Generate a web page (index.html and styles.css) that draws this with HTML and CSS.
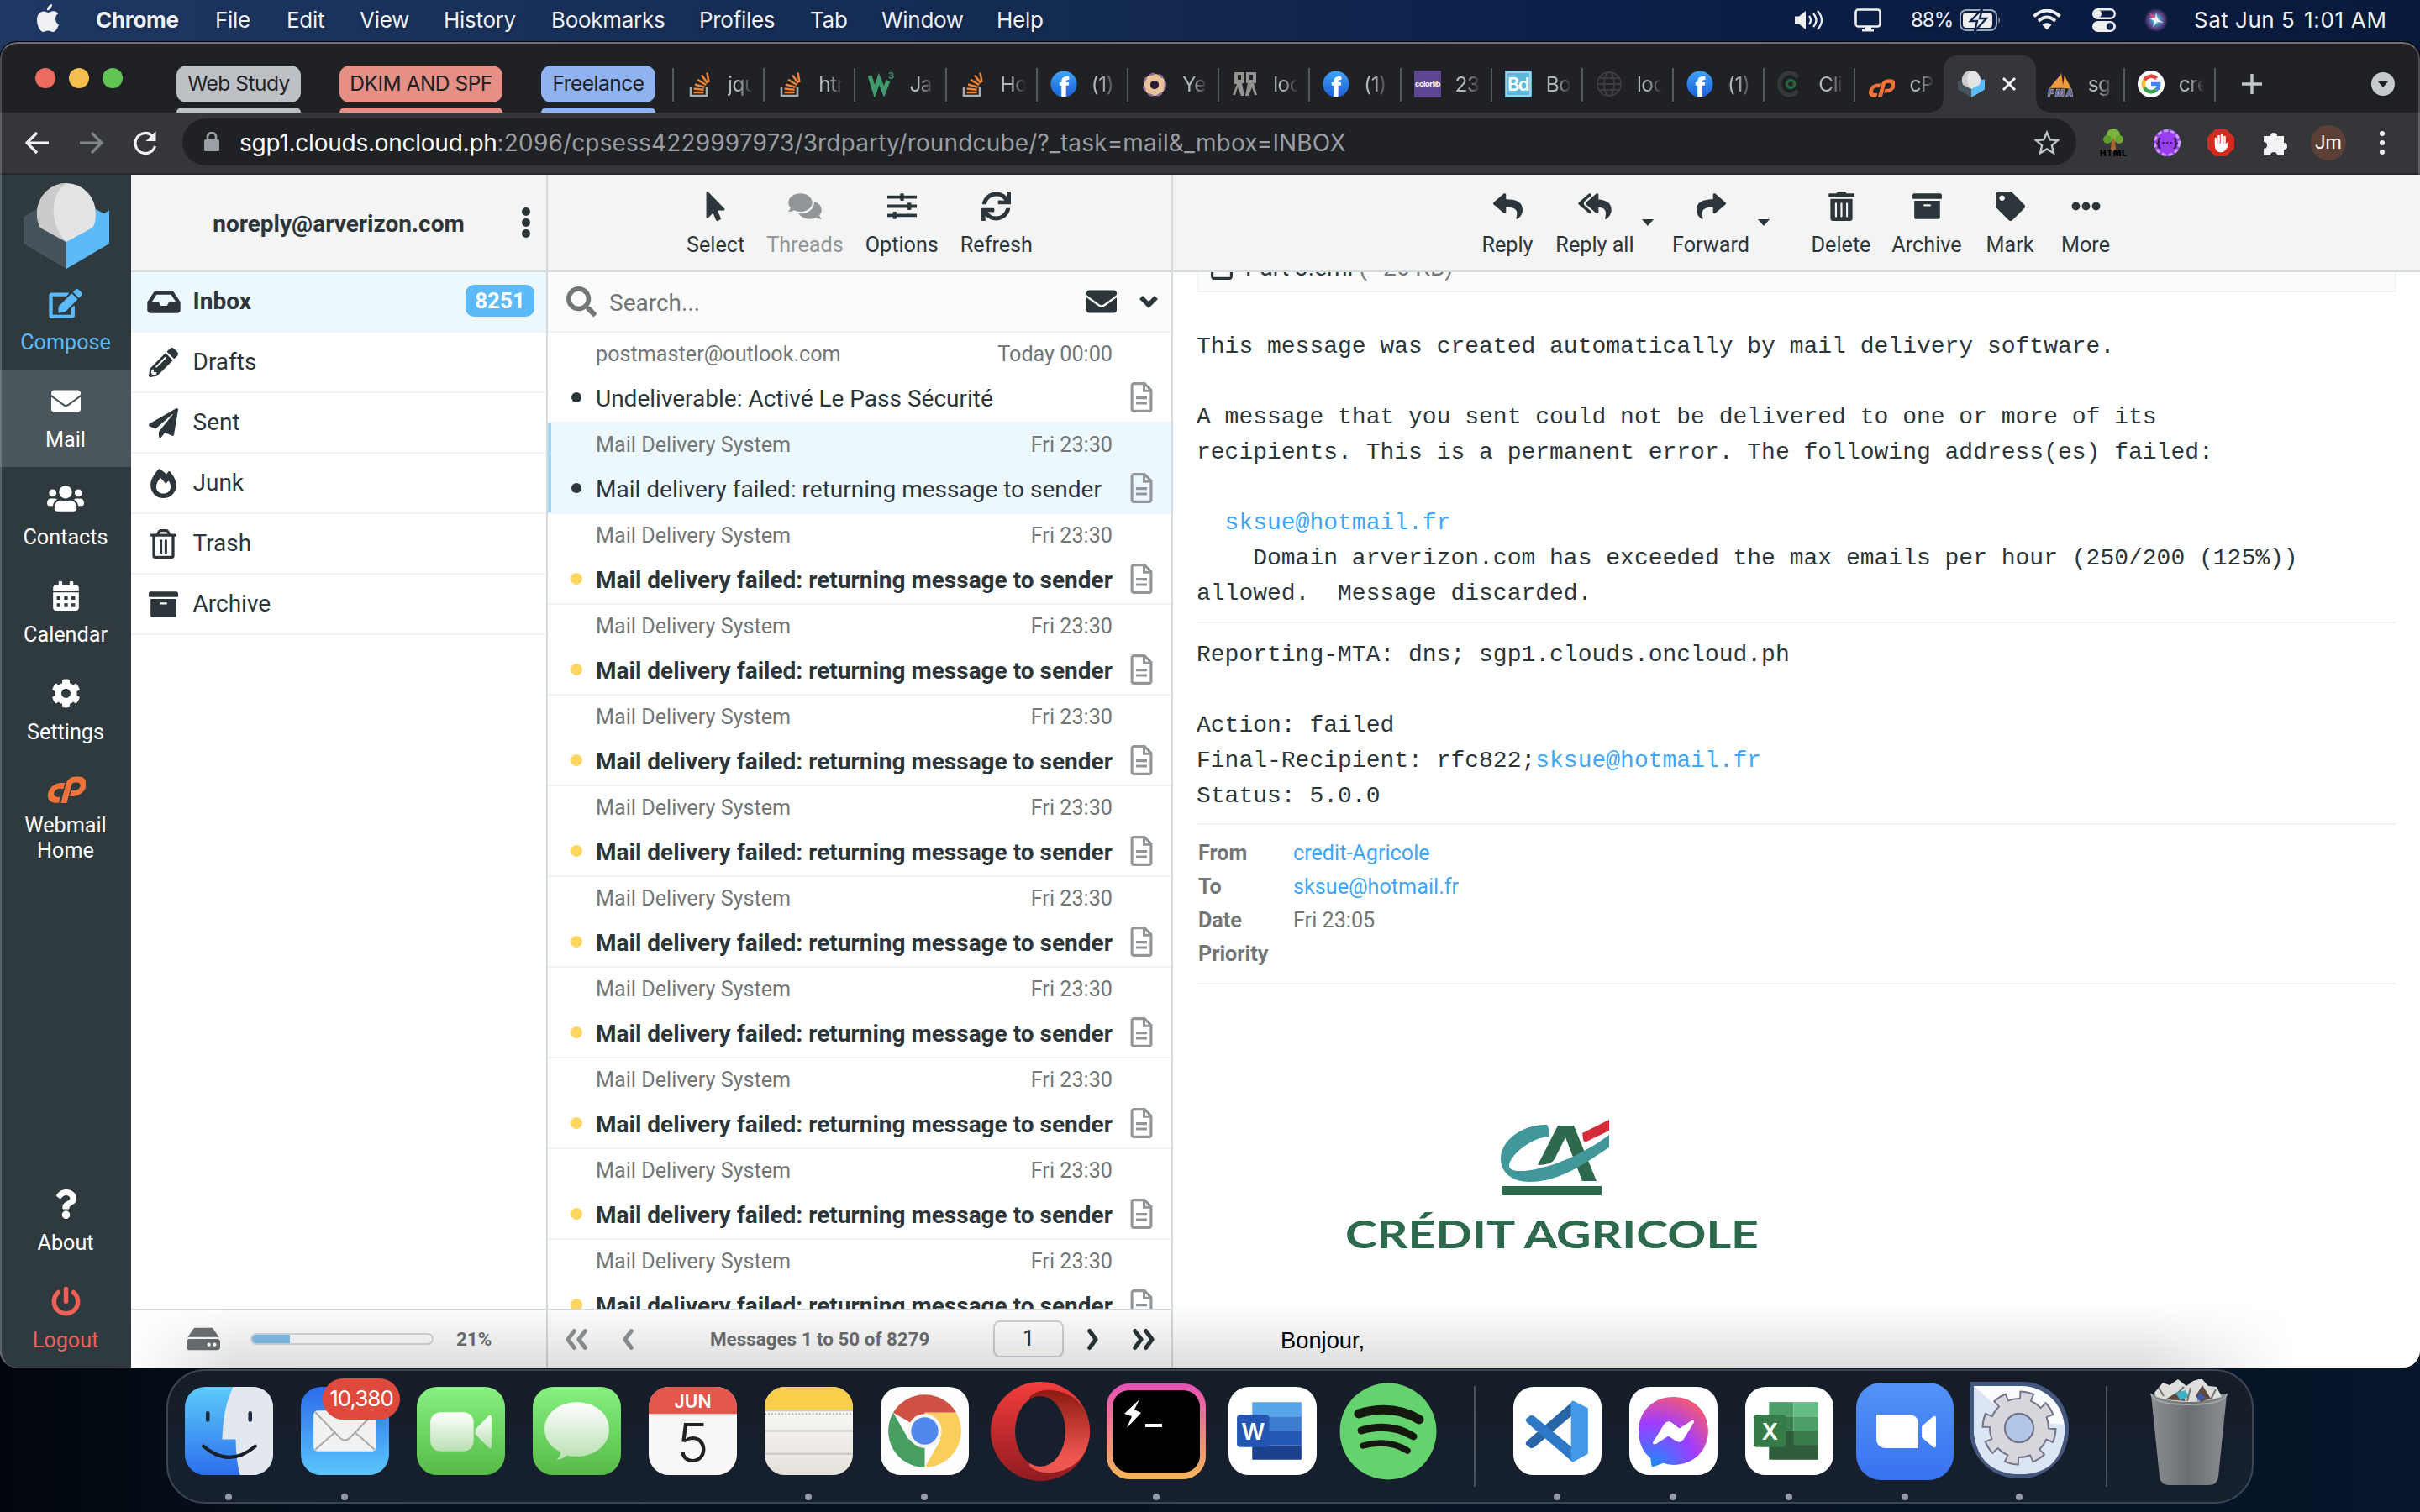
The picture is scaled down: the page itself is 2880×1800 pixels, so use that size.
FILE: index.html
```html
<!DOCTYPE html>
<html lang="en">
<head>
<meta charset="utf-8">
<title>Roundcube Webmail :: Inbox</title>
<link rel="stylesheet" href="styles.css">
</head>
<body>
<svg class="defs" width="0" height="0">
  <defs>
    <linearGradient id="g-fb" x1="0" y1="0" x2="0" y2="1"><stop offset="0" stop-color="#3fa3f5"/><stop offset="1" stop-color="#1b5fd8"/></linearGradient>
    <linearGradient id="g-blue" x1="0" y1="0" x2="0" y2="1"><stop offset="0" stop-color="#5ccbfa"/><stop offset="1" stop-color="#2c6fec"/></linearGradient>
    <linearGradient id="g-mail" x1="0" y1="0" x2="0" y2="1"><stop offset="0" stop-color="#2c6bea"/><stop offset="1" stop-color="#5ac6fa"/></linearGradient>
    <linearGradient id="g-green" x1="0" y1="0" x2="0" y2="1"><stop offset="0" stop-color="#87f080"/><stop offset="1" stop-color="#56bb46"/></linearGradient>
    <linearGradient id="g-white" x1="0" y1="0" x2="0" y2="1"><stop offset="0" stop-color="#fff"/><stop offset="1" stop-color="#b9dfb2"/></linearGradient>
    <linearGradient id="g-paper" x1="0" y1="0" x2="0" y2="1"><stop offset="0" stop-color="#fff"/><stop offset="1" stop-color="#e4e0da"/></linearGradient>
    <linearGradient id="g-opera" x1="0" y1="0" x2="0" y2="1"><stop offset="0" stop-color="#f43d3d"/><stop offset="1" stop-color="#8f1b20"/></linearGradient>
    <linearGradient id="g-opera2" x1="0" y1="0" x2="0" y2="1"><stop offset="0" stop-color="#8c1a12"/><stop offset=".8" stop-color="#ee5650"/></linearGradient>
    <linearGradient id="g-term" x1="0" y1="0" x2="0" y2="1"><stop offset="0" stop-color="#e750b6"/><stop offset="1" stop-color="#f4b658"/></linearGradient>
    <linearGradient id="g-zoom" x1="0" y1="0" x2="0" y2="1"><stop offset="0" stop-color="#5294f8"/><stop offset="1" stop-color="#3872ef"/></linearGradient>
    <radialGradient id="g-msgr" cx=".2" cy="1" r="1.15"><stop offset="0" stop-color="#1a8cff"/><stop offset=".55" stop-color="#a13cff"/><stop offset="1" stop-color="#ff5e63"/></radialGradient>
    <radialGradient id="g-siri"><stop offset="0" stop-color="#fff"/><stop offset=".3" stop-color="#4aa5c9"/><stop offset=".7" stop-color="#5d3f86"/><stop offset="1" stop-color="#1f2444"/></radialGradient>
    <linearGradient id="g-bin" x1="0" y1="0" x2="1" y2="0"><stop offset="0" stop-color="#8b8e90"/><stop offset=".5" stop-color="#6c6f71"/><stop offset="1" stop-color="#8b8e90"/></linearGradient>
    <linearGradient id="g-gear" x1="0" y1="0" x2="0" y2="1"><stop offset="0" stop-color="#e6e6e8"/><stop offset="1" stop-color="#b9bac4"/></linearGradient>
  </defs>
  <symbol id="envelope" viewBox="0 0 512 512"><path d="M502.3 190.8c3.9-3.1 9.7-.2 9.7 4.7V400c0 26.5-21.5 48-48 48H48c-26.5 0-48-21.5-48-48V195.6c0-5 5.7-7.8 9.7-4.7 22.4 17.4 52.1 39.5 154.1 113.6 21.1 15.4 56.7 47.8 92.2 47.6 35.7.3 72-32.8 92.3-47.6 102-74.1 131.6-96.3 154-113.7zM256 320c23.2.4 56.6-29.2 73.4-41.4 132.7-96.3 142.8-104.7 173.4-128.7 5.8-4.5 9.2-11.5 9.2-18.9v-19c0-26.5-21.5-48-48-48H48c-26.5 0-48 21.5-48 48v19c0 7.4 3.4 14.3 9.2 18.9 30.6 23.9 40.7 32.4 173.4 128.7 16.8 12.2 50.2 41.8 73.4 41.4z"/></symbol>
  <symbol id="reply" viewBox="0 0 512 512"><path d="M8.309 189.836L184.313 37.851C199.719 24.546 224 35.347 224 56.015v80.053c160.629 1.839 288 34.032 288 186.258 0 61.441-39.581 122.309-83.333 154.132-13.653 9.931-33.111-2.533-28.077-18.631 45.344-145.012-21.507-183.51-176.59-185.742V360c0 20.7-24.3 31.453-39.687 18.164l-176.004-152c-11.071-9.562-11.086-26.753 0-36.328z"/></symbol>
  <symbol id="forward" viewBox="0 0 512 512"><path transform="matrix(-1 0 0 1 512 0)" d="M8.309 189.836L184.313 37.851C199.719 24.546 224 35.347 224 56.015v80.053c160.629 1.839 288 34.032 288 186.258 0 61.441-39.581 122.309-83.333 154.132-13.653 9.931-33.111-2.533-28.077-18.631 45.344-145.012-21.507-183.51-176.59-185.742V360c0 20.7-24.3 31.453-39.687 18.164l-176.004-152c-11.071-9.562-11.086-26.753 0-36.328z"/></symbol>
  <symbol id="replyall" viewBox="0 0 576 512"><path d="M136.309 189.836L312.313 37.851C327.72 24.546 352 35.348 352 56.015v82.763c129.182 10.231 224 52.212 224 183.548 0 61.441-39.582 122.309-83.333 154.132-13.653 9.931-33.111-2.533-28.077-18.631 38.512-123.162-3.922-169.482-112.59-182.015v84.175c0 20.701-24.3 31.453-39.687 18.164L136.309 226.164c-11.071-9.561-11.086-26.753 0-36.328zm-128 36.328L184.313 378.15C199.7 391.439 224 380.687 224 359.986v-15.818l-108.606-93.785A55.96 55.96 0 0 1 96 207.998a55.953 55.953 0 0 1 19.393-42.38L224 71.832V56.015c0-20.667-24.28-31.469-39.687-18.164L8.309 189.836c-11.086 9.575-11.071 26.767 0 36.328z"/></symbol>
  <symbol id="trash" viewBox="0 0 448 512"><path d="M32 464a48 48 0 0 0 48 48h288a48 48 0 0 0 48-48V128H32zm272-256a16 16 0 0 1 32 0v224a16 16 0 0 1-32 0zm-96 0a16 16 0 0 1 32 0v224a16 16 0 0 1-32 0zm-96 0a16 16 0 0 1 32 0v224a16 16 0 0 1-32 0zM432 32H312l-9.4-18.7A24 24 0 0 0 281.1 0H166.8a23.72 23.72 0 0 0-21.4 13.3L136 32H16A16 16 0 0 0 0 48v32a16 16 0 0 0 16 16h416a16 16 0 0 0 16-16V48a16 16 0 0 0-16-16z"/></symbol>
  <symbol id="trash-o" viewBox="0 0 448 512"><path d="M56 104v360q0 24 24 24h288q24 0 24-24V104" fill="none" stroke="currentColor" stroke-width="48"/><path d="M0 80h448v48H0zM160 184h44v240h-44zM244 184h44v240h-44z"/><path d="M118 92l34-56q8-12 20-12h104q12 0 20 12l34 56" fill="none" stroke="currentColor" stroke-width="46"/></symbol>
  <symbol id="archive" viewBox="0 0 512 512"><path d="M32 448c0 17.7 14.3 32 32 32h384c17.7 0 32-14.3 32-32V160H32v288zm160-212c0-6.6 5.4-12 12-12h104c6.6 0 12 5.4 12 12v8c0 6.6-5.4 12-12 12H204c-6.6 0-12-5.4-12-12v-8zM480 32H32C14.3 32 0 46.3 0 64v48c0 8.8 7.2 16 16 16h480c8.8 0 16-7.2 16-16V64c0-17.7-14.3-32-32-32z"/></symbol>
  <symbol id="tag" viewBox="0 0 512 512"><path d="M0 252.118V48C0 21.49 21.49 0 48 0h204.118a48 48 0 0 1 33.941 14.059l211.882 211.882c18.745 18.745 18.745 49.137 0 67.882L293.823 497.941c-18.745 18.745-49.137 18.745-67.882 0L14.059 286.059A48 48 0 0 1 0 252.118zM112 64c-26.51 0-48 21.49-48 48s21.49 48 48 48 48-21.49 48-48-21.49-48-48-48z"/></symbol>
  <symbol id="more" viewBox="0 0 512 512"><circle cx="80" cy="256" r="72"/><circle cx="256" cy="256" r="72"/><circle cx="432" cy="256" r="72"/></symbol>
  <symbol id="inbox" viewBox="0 0 576 512"><path d="M567.938 243.908L462.25 85.374A48.003 48.003 0 0 0 422.311 64H153.689a48 48 0 0 0-39.938 21.374L8.062 243.908A47.994 47.994 0 0 0 0 270.533V400c0 26.51 21.49 48 48 48h480c26.51 0 48-21.49 48-48V270.533a47.994 47.994 0 0 0-8.062-26.625zM162.252 128h251.497l85.333 128H376l-32 64H232l-32-64H76.918l85.334-128z"/></symbol>
  <symbol id="pencil" viewBox="0 0 512 512"><path d="M497.9 142.1l-46.1 46.1c-4.7 4.7-12.3 4.7-17 0l-111-111c-4.7-4.7-4.7-12.3 0-17l46.1-46.1c18.7-18.7 49.1-18.7 67.9 0l60.1 60.1c18.8 18.7 18.8 49.1 0 67.9zM284.2 99.8L21.6 362.4.4 483.9c-2.9 16.4 11.4 30.6 27.8 27.8l121.5-21.3 262.6-262.6c4.7-4.7 4.7-12.3 0-17l-111-111c-4.8-4.7-12.4-4.7-17.1 0zM124.1 339.9c-5.5-5.5-5.5-14.3 0-19.8l154-154c5.5-5.5 14.3-5.5 19.8 0s5.5 14.3 0 19.8l-154 154c-5.5 5.5-14.3 5.5-19.8 0zM88 424h48v36.3l-64.5 11.3-31.1-31.1L51.7 376H88v48z"/></symbol>
  <symbol id="plane" viewBox="0 0 512 512"><path d="M476 3.2L12.5 270.6c-18.1 10.4-15.8 35.6 2.2 43.2L121 358.4l287.3-253.2c5.5-4.9 13.3 2.6 8.6 8.3L176 407v80.5c0 23.6 28.5 32.9 42.5 15.8L282 426l124.6 52.2c14.2 6 30.4-2.9 33-18.2l72-432C515 7.8 493.3-6.8 476 3.2z"/></symbol>
  <symbol id="fire" viewBox="0 0 448 512"><path fill-rule="evenodd" d="M162 4c-9-9-16-3-22 4C62 96 0 190 0 284c0 130 98 228 224 228s224-98 224-228c0-78-52-168-112-236-8-8-16-6-22 0-14 14-26 30-38 48C246 62 206 40 162 4zM224 432c-76 0-126-50-126-118 0-52 28-104 74-158 34 36 60 70 92 104l48-52c24 36 38 72 38 106 0 68-50 118-126 118z"/></symbol>
  <symbol id="power" viewBox="0 0 512 512"><path d="M400 54.1c63 45 104 118.6 104 201.9 0 136.8-110.8 247.7-247.5 248C120 504.3 8.2 393 8 256.4 7.9 173.1 48.9 99.3 111.8 54.2c11.7-8.3 28-4.8 35 7.7L162.6 90c5.9 10.5 3.1 23.8-6.6 31-41.5 30.8-68 79.6-68 134.9-.1 92.3 74.5 168.1 168 168.1 91.6 0 168.6-74.2 168-169.1-.3-51.8-24.7-101.8-68.1-134-9.7-7.2-12.4-20.5-6.5-30.9l15.8-28.1c7-12.4 23.2-16.1 34.8-7.8zM296 264V24c0-13.3-10.7-24-24-24h-32c-13.3 0-24 10.7-24 24v240c0 13.3 10.7 24 24 24h32c13.3 0 24-10.7 24-24z"/></symbol>
  <symbol id="edit" viewBox="0 0 576 512"><path d="M402.6 83.2l90.2 90.2c3.8 3.8 3.8 10 0 13.8L274.4 405.6l-92.8 10.3c-12.4 1.4-22.9-9.1-21.5-21.5l10.3-92.8L388.8 83.2c3.8-3.8 10-3.8 13.8 0zm162-22.9l-48.8-48.8c-15.2-15.2-39.9-15.2-55.2 0l-35.4 35.4c-3.8 3.8-3.8 10 0 13.8l90.2 90.2c3.8 3.8 10 3.8 13.8 0l35.4-35.4c15.2-15.3 15.2-40 0-55.2zM384 346.2V448H64V128h229.8c3.2 0 6.2-1.3 8.5-3.5l40-40c7.6-7.6 2.2-20.5-8.5-20.5H48C21.5 64 0 85.5 0 112v352c0 26.5 21.5 48 48 48h352c26.5 0 48-21.5 48-48V306.2c0-10.7-12.9-16-20.5-8.5l-40 40c-2.2 2.3-3.5 5.3-3.5 8.5z"/></symbol>
  <symbol id="users" viewBox="0 0 640 512"><path d="M96 224c35.3 0 64-28.7 64-64s-28.7-64-64-64-64 28.7-64 64 28.7 64 64 64zm448 0c35.3 0 64-28.7 64-64s-28.7-64-64-64-64 28.7-64 64 28.7 64 64 64zm32 32h-64c-17.6 0-33.5 7.1-45.1 18.6 40.3 22.1 68.9 62 75.1 109.4h66c17.7 0 32-14.3 32-32v-32c0-35.3-28.7-64-64-64zm-256 0c61.9 0 112-50.1 112-112S381.9 32 320 32 208 82.1 208 144s50.1 112 112 112zm76.8 32h-8.3c-20.8 10-43.9 16-68.5 16s-47.6-6-68.5-16h-8.3C179.6 288 128 339.6 128 403.2V432c0 26.5 21.5 48 48 48h288c26.5 0 48-21.5 48-48v-28.8c0-63.6-51.6-115.2-115.2-115.2zm-223.7-13.4C161.5 263.1 145.6 256 128 256H64c-35.3 0-64 28.7-64 64v32c0 17.7 14.3 32 32 32h65.9c6.3-47.4 34.9-87.3 75.2-109.4z"/></symbol>
  <symbol id="calendar" viewBox="0 0 448 512"><path fill-rule="evenodd" d="M0 464c0 26.5 21.5 48 48 48h352c26.5 0 48-21.5 48-48V192H0zM64 256h64v64H64zM192 256h64v64h-64zM320 256h64v64h-64zM64 384h64v64H64zM192 384h64v64h-64zM320 384h64v64h-64z"/><path d="M400 64h-48V16c0-8.8-7.2-16-16-16h-32c-8.8 0-16 7.2-16 16v48H160V16c0-8.8-7.2-16-16-16h-32c-8.8 0-16 7.2-16 16v48H48C21.5 64 0 85.5 0 112v48h448v-48c0-26.5-21.5-48-48-48z"/></symbol>
  <symbol id="cog" viewBox="0 0 512 512"><path d="M487.4 315.7l-42.6-24.6c4.3-23.2 4.3-47 0-70.2l42.6-24.6c4.9-2.8 7.1-8.6 5.5-14-11.1-35.6-30-67.8-54.7-94.6-3.8-4.1-10-5.1-14.8-2.3L380.8 110c-17.9-15.4-38.5-27.3-60.8-35.1V25.8c0-5.6-3.9-10.5-9.4-11.7-36.7-8.2-74.3-7.8-109.2 0-5.5 1.2-9.4 6.1-9.4 11.7V75c-22.2 7.9-42.8 19.8-60.8 35.1L88.7 85.5c-4.9-2.8-11-1.9-14.8 2.3-24.7 26.7-43.6 58.9-54.7 94.6-1.7 5.4.6 11.2 5.5 14L67.3 221c-4.3 23.2-4.3 47 0 70.2l-42.6 24.6c-4.9 2.8-7.1 8.6-5.5 14 11.1 35.6 30 67.8 54.7 94.6 3.8 4.1 10 5.1 14.8 2.3l42.6-24.6c17.9 15.4 38.5 27.3 60.8 35.1v49.2c0 5.6 3.9 10.5 9.4 11.7 36.7 8.2 74.3 7.8 109.2 0 5.5-1.2 9.4-6.1 9.4-11.7v-49.2c22.2-7.9 42.8-19.8 60.8-35.1l42.6 24.6c4.9 2.8 11 1.9 14.8-2.3 24.7-26.7 43.6-58.9 54.7-94.6 1.5-5.5-.7-11.3-5.6-14.1zM256 336c-44.1 0-80-35.9-80-80s35.9-80 80-80 80 35.9 80 80-35.9 80-80 80z"/></symbol>
  <symbol id="question" viewBox="0 0 384 512"><path d="M202.021 0C122.202 0 70.503 32.703 29.914 91.026c-7.363 10.58-5.093 25.086 5.178 32.874l43.138 32.709c10.373 7.865 25.132 6.026 33.253-4.148 25.049-31.381 43.63-49.449 82.757-49.449 30.764 0 68.816 19.799 68.816 49.631 0 22.552-18.617 34.134-48.993 51.164-35.423 19.86-82.299 44.576-82.299 106.405V320c0 13.255 10.745 24 24 24h72.471c13.255 0 24-10.745 24-24v-5.773c0-42.86 125.268-44.645 125.268-160.627C377.504 66.256 286.902 0 202.021 0zM192 373.459c-38.196 0-69.271 31.075-69.271 69.271 0 38.195 31.075 69.27 69.271 69.27s69.271-31.075 69.271-69.271-31.075-69.27-69.271-69.27z"/></symbol>
  <symbol id="pointer" viewBox="0 0 320 512"><path d="M302.189 329.126H196.105l55.831 135.993c3.889 9.428-.555 19.999-9.444 23.999l-49.165 21.427c-9.165 4-19.443-.571-23.332-9.714l-53.053-129.136-86.664 89.138C18.729 472.71 0 463.554 0 447.977V18.299C0 1.899 19.921-6.096 30.277 5.443l284.412 292.542c11.472 11.179 3.007 31.141-12.5 31.141z"/></symbol>
  <symbol id="comments" viewBox="0 0 576 512"><path d="M416 192c0-88.4-93.1-160-208-160S0 103.6 0 192c0 34.3 14.1 65.9 38 92-13.4 30.2-35.5 54.2-35.8 54.5-2.2 2.3-2.8 5.7-1.5 8.7S4.8 352 8 352c36.6 0 66.9-12.3 88.7-25 32.2 15.7 70.3 25 111.3 25 114.9 0 208-71.6 208-160zm122 220c23.9-26 38-57.7 38-92 0-66.9-53.5-124.2-129.3-148.1.9 6.6 1.3 13.3 1.3 20.1 0 105.9-107.7 192-240 192-10.8 0-21.3-.8-31.7-1.9C207.8 439.6 281.8 480 368 480c41 0 79.1-9.2 111.3-25 21.8 12.7 52.1 25 88.7 25 3.2 0 6.1-1.9 7.3-4.8 1.3-2.9.7-6.3-1.5-8.7-.3-.3-22.4-24.2-35.8-54.5z"/></symbol>
  <symbol id="sliders" viewBox="0 0 512 512"><path d="M0 68h512v56H0zM0 228h512v56H0zM0 388h512v56H0z"/><rect x="224" y="32" width="64" height="128" rx="14"/><rect x="352" y="192" width="64" height="128" rx="14"/><rect x="96" y="352" width="64" height="128" rx="14"/></symbol>
  <symbol id="sync" viewBox="0 0 512 512"><path d="M440.65 12.57l4 82.77A247.16 247.16 0 0 0 255.83 8C134.73 8 33.91 94.92 12.29 209.82A12 12 0 0 0 24.09 224h49.05a12 12 0 0 0 11.67-9.26 175.91 175.91 0 0 1 317-56.94l-101.46-4.86a12 12 0 0 0-12.57 12v47.41a12 12 0 0 0 12 12H500a12 12 0 0 0 12-12V12a12 12 0 0 0-12-12h-47.37a12 12 0 0 0-11.98 12.57zM255.83 432a175.61 175.61 0 0 1-146-77.8l101.8 4.87a12 12 0 0 0 12.57-12v-47.4a12 12 0 0 0-12-12H12a12 12 0 0 0-12 12V500a12 12 0 0 0 12 12h47.35a12 12 0 0 0 12-12.6l-4.15-82.57A247.17 247.17 0 0 0 255.83 504c121.11 0 221.93-86.92 243.55-201.82a12 12 0 0 0-11.8-14.18h-49.05a12 12 0 0 0-11.67 9.26A175.86 175.86 0 0 1 255.83 432z"/></symbol>
  <symbol id="search" viewBox="0 0 512 512"><path d="M505 442.7L405.3 343c-4.5-4.5-10.6-7-17-7H372c27.6-35.3 44-79.7 44-128C416 93.1 322.9 0 208 0S0 93.1 0 208s93.1 208 208 208c48.3 0 92.7-16.4 128-44v16.3c0 6.4 2.5 12.5 7 17l99.7 99.7c9.4 9.4 24.6 9.4 33.9 0l28.3-28.3c9.4-9.4 9.4-24.6.1-34zM208 336c-70.7 0-128-57.2-128-128 0-70.7 57.2-128 128-128 70.7 0 128 57.2 128 128 0 70.7-57.2 128-128 128z"/></symbol>
  <symbol id="disk" viewBox="0 0 576 512"><path d="M576 304v96c0 26.51-21.49 48-48 48H48c-26.51 0-48-21.49-48-48v-96c0-26.51 21.49-48 48-48h480c26.51 0 48 21.49 48 48zm-48-80a79.557 79.557 0 0 1 30.777 6.165L462.25 85.374A48.003 48.003 0 0 0 422.311 64H153.689a48 48 0 0 0-39.938 21.374L17.223 230.165A79.557 79.557 0 0 1 48 224h480zm-48 96c-17.673 0-32 14.327-32 32s14.327 32 32 32 32-14.327 32-32-14.327-32-32-32zm-96 0c-17.673 0-32 14.327-32 32s14.327 32 32 32 32-14.327 32-32-14.327-32-32-32z"/></symbol>
  <symbol id="file" viewBox="0 0 26 36"><path d="M4 1.6h12.6l7.8 7.8V32a2.2 2.2 0 0 1-2.2 2.4H3.8A2.2 2.2 0 0 1 1.6 32V4A2.3 2.3 0 0 1 4 1.6zM16 2v8.2h8" fill="none" stroke="currentColor" stroke-width="3.1"/><path d="M6.5 17h13v3.2h-13zM6.5 23.4h13v3.2h-13z"/></symbol>
  <symbol id="chev" viewBox="0 0 24 32"><path d="M8 4l9 12-9 12" fill="none" stroke="currentColor" stroke-width="6" stroke-linecap="round" stroke-linejoin="round"/></symbol>
  <symbol id="so" viewBox="0 0 32 32"><path d="M5 20v10h19V20" fill="none" stroke="#a9adb0" stroke-width="2.6"/><path d="M8.500 26h12M8.600 21.500l12 1.200M10 16.500l11.500 3.200M13 10.800l10.300 6.200M18 5.500l7 9.500M24.500 2.500l2 11.500" stroke="#ee8335" stroke-width="2.600"/></symbol>
  <symbol id="fb" viewBox="0 0 32 32"><circle cx="16" cy="16" r="15.500" fill="url(#g-fb)"/><text x="10.500" y="30.500" font-family="Roboto, sans-serif" font-weight="900" font-size="32" fill="#fff">f</text></symbol>
  <symbol id="cp" viewBox="0 0 46 32"><g transform="translate(7.500 0) skewX(-15)" fill="none" stroke="#f0733a" stroke-width="7"><path d="M16.500 11.500H11.500a8.250 8.250 0 0 0 0 16.800H15.500"/><path d="M21.500 32V10Q21.500 4 27.500 4H31a8.200 8.200 0 0 1 0 16.500H26.500"/></g></symbol>
  <symbol id="cube" viewBox="0 0 102 102"><path d="M0 40l51-30 51 30v32L51 102 0 72z" fill="#46535a"/><path d="M51 70l51-38v40l-51 30z" fill="#5cbaf9"/><path d="M86 31l16 9v10L80 54z" fill="#5cbaf9"/><path d="M51 0a35 36 0 0 1 35 36q0 12-4 17L51 70 20 53q-4-7-4-17A35 36 0 0 1 51 0z" fill="#e4e4e4"/><path d="M51 0A35 36 0 0 0 16 36q0 10 4 17l31 17C30 48 31 14 51 0z" fill="#cbcbcb"/></symbol>
</svg>

<header class="menubar">
  <svg class="apple" viewBox="0 0 28 34"><path d="M19 0c.3 3.600-3 7.400-6 7.300C12.600 4 15.800.5 19 0zM27 24.500C25 29.500 22.500 33 20 33c-2.200 0-3-1.400-5.800-1.400S10.500 33 8.500 33C5 33 1 25.500 1 19 1 12 5 8.500 9 8.500c2.400 0 4 1.500 5.500 1.500S18 8.300 20.800 8.300c2 0 4.200 1 5.500 3-4.800 3-4 10.500.7 13.200z" fill="#eef0f4"/></svg>
  <nav class="menus">
    <b style="width:142px">Chrome</b><span style="width:85px">File</span><span style="width:87px">Edit</span><span style="width:100px">View</span><span style="width:128px">History</span><span style="width:176px">Bookmarks</span><span style="width:132px">Profiles</span><span style="width:85px">Tab</span><span style="width:137px">Window</span><span>Help</span>
  </nav>
  <div class="status">
    <svg width="38" height="28" viewBox="0 0 38 28"><path d="M1 9.500h5L14 3v22L6 18.500H1z" fill="#eee"/><path d="M18 9q4 5 0 10M23 6q7 8 0 16M28 3q10 11 0 22" fill="none" stroke="#eee" stroke-width="2.200"/></svg>
    <svg class="s-disp" width="32" height="28" viewBox="0 0 32 28"><rect x="1.500" y="1.500" width="29" height="20" rx="3" fill="none" stroke="#eee" stroke-width="2.600"/><path d="M12 22h8v3h3v2.500H9V25h3z" fill="#eee"/></svg>
    <span class="s-pct">88%</span>
    <svg class="s-bat" width="50" height="26" viewBox="0 0 50 26"><rect x="1" y="1" width="43" height="24" rx="7" fill="none" stroke="#9aa6ba" stroke-width="2"/><path d="M46.500 9q3 4 0 8z" fill="#9aa6ba"/><rect x="4" y="4" width="35" height="18" rx="4" fill="#eee"/><path d="M27 0L13 14h8l-3 12 14-15h-8z" fill="#eee" stroke="#10244c" stroke-width="2.400"/></svg>
    <svg class="s-wifi" width="34" height="25" viewBox="0 0 34 25"><path d="M1.500 8.500q15.500-14 31 0M7 14q10-9 20 0" fill="none" stroke="#eee" stroke-width="3.800"/><path d="M11.500 18.500q5.500-4.500 11 0L17 24.500z" fill="#eee"/></svg>
    <svg class="s-cc" width="28" height="28" viewBox="0 0 28 28"><rect x="1.200" y="1.200" width="25.600" height="10.600" rx="5.300" fill="none" stroke="#eee" stroke-width="2.400"/><circle cx="6.500" cy="6.500" r="4.500" fill="#eee"/><rect y="15" width="28" height="13" rx="6.500" fill="#eee"/><circle cx="21" cy="21.500" r="4.200" fill="#10244c"/></svg>
    <svg class="s-siri" width="28" height="28" viewBox="0 0 28 28"><circle cx="14" cy="14" r="13.500" fill="url(#g-siri)"/><path d="M6 6q9 1 8 8-6-1-8-8z" fill="#c84c7c"/><path d="M14 5l2 8 7 4-8-1-5 7 2-8-6-3 7-1z" fill="#fff" opacity=".85"/></svg>
    <span class="s-date">Sat Jun 5</span><span class="s-time">1:01 AM</span>
  </div>
</header>

<main class="window">
  <div class="tabstrip">
    <div class="lights"><i class="red"></i><i class="amber"></i><i class="green"></i></div>
    <div class="group grey" style="width:148px"><span>Web Study</span></div>
    <div class="group coral" style="width:194px"><span>DKIM AND SPF</span></div>
    <div class="group blue" style="width:136px"><span>Freelance</span></div>
    <div class="tabs">
      <div class="tab"><svg><use href="#so"/></svg><span>jque</span></div>
      <div class="tab"><svg><use href="#so"/></svg><span>html</span></div>
      <div class="tab"><svg viewBox="0 0 32 32"><path d="M2 6l6 19 5-15 6 15 5-13" fill="none" stroke="#3f9b6c" stroke-width="5"/><text x="24" y="10" font-family="Inter, sans-serif" font-weight="700" font-size="11" fill="#3f9b6c">3</text></svg><span>Java</span></div>
      <div class="tab"><svg><use href="#so"/></svg><span>How</span></div>
      <div class="tab"><svg><use href="#fb"/></svg><span>(1) F</span></div>
      <div class="tab"><svg viewBox="0 0 32 32"><circle cx="16" cy="17" r="9" fill="none" stroke="#e8c39a" stroke-width="8"/><circle cx="16" cy="17" r="5" fill="#2b1c36"/><circle cx="16" cy="17" r="13" fill="none" stroke="#8a6a9c" stroke-width="2.500" stroke-dasharray="6 5"/></svg><span>Yeo</span></div>
      <div class="tab"><svg viewBox="0 0 32 32"><path d="M3 2h12v13h-3l3 15h-4l-4-10-3 9H1l5-13H3zM17 2h12v13h-3l4 14h-3l-3-9-4 10h-4l3-15h-2z" fill="#94938f"/><path d="M7 5h4v6H7zM21 5h4v6h-4z" fill="#222"/></svg><span>loca</span></div>
      <div class="tab"><svg><use href="#fb"/></svg><span>(1) F</span></div>
      <div class="tab"><svg viewBox="0 0 32 32"><path d="M0 0h32v32H0z" fill="#5d4690"/><text x="1" y="19" textLength="30" font-family="Inter, sans-serif" font-weight="700" font-size="9" fill="#fff">colorlib</text></svg><span>23 B</span></div>
      <div class="tab"><svg viewBox="0 0 32 32"><path d="M0 0h32v32H0z" fill="#5db7d9"/><path d="M2 2h28v28H2z" fill="none" stroke="#d9f0f8"/><text x="3" y="24" textLength="26" font-family="Inter, sans-serif" font-weight="600" font-size="22" fill="#fff">Bd</text></svg><span>Boo</span></div>
      <div class="tab"><svg viewBox="0 0 32 32"><g fill="none" stroke="#3c3e40" stroke-width="2"><circle cx="16" cy="16" r="14"/><ellipse cx="16" cy="16" rx="6" ry="14"/><path d="M2 16h28M4 9h24M4 23h24"/></g></svg><span>loca</span></div>
      <div class="tab"><svg><use href="#fb"/></svg><span>(1) F</span></div>
      <div class="tab"><svg viewBox="0 0 32 32"><path d="M24 8a12 13 0 1 0 0 16" fill="none" stroke="#343836" stroke-width="5"/><circle cx="16" cy="16" r="4.500" fill="none" stroke="#23683f" stroke-width="3.500"/></svg><span>Clie</span></div>
      <div class="tab"><svg viewBox="0 0 32 32"><svg x="0" y="5" width="32" height="22"><use href="#cp"/></svg></svg><span>cPa</span></div>
      <div class="tab active"><svg class="fav"><use href="#cube"/></svg><svg class="close" viewBox="0 0 18 18"><path d="M2 2l14 14M16 2L2 16" stroke="#f1f3f4" stroke-width="3"/></svg></div>
      <div class="tab noline"><svg viewBox="0 0 34 32"><path d="M3 21L16 6v15zM14 21L18 1l3 20zM20 21l2-16 9 17z" fill="#ef9a3c"/><text x="1" y="32" textLength="32" font-family="Inter, sans-serif" font-weight="900" font-style="italic" font-size="12" fill="#55588c" stroke="#d6d6e6" stroke-width=".5">PMA</text></svg><span>sgp</span></div>
      <div class="tab"><svg viewBox="0 0 32 32"><circle cx="16" cy="16" r="16" fill="#fff"/><g fill="none" stroke-width="4.500"><path d="M22.500 9.500A9.200 9.200 0 0 0 8 11.500" stroke="#e24a3d"/><path d="M8 11.500a9.200 9.200 0 0 0 0 9" stroke="#f4bd2e"/><path d="M8 20.500a9.200 9.200 0 0 0 14 2.500" stroke="#38a452"/><path d="M22 23a9 9 0 0 0 3.200-7H16" stroke="#4384f3"/></g></svg><span>cred</span></div>
      <div class="newtab"><svg width="26" height="26" viewBox="0 0 26 26"><path d="M13 1v24M1 13h24" stroke="#c3c6ca" stroke-width="3.400"/></svg></div>
    </div>
    <svg class="tabmenu" width="28" height="28" viewBox="0 0 28 28"><circle cx="14" cy="14" r="14" fill="#c6c9cd"/><path d="M8 11h12l-6 7z" fill="#202124"/></svg>
  </div>

  <div class="toolbar">
    <svg class="t-back" width="30" height="28" viewBox="0 0 30 28"><path d="M29 14H3M15 2L3 14l12 12" fill="none" stroke="#f1f3f4" stroke-width="3.200"/></svg>
    <svg class="t-fwd" width="30" height="28" viewBox="0 0 30 28"><path d="M1 14h26M15 2l12 12-12 12" fill="none" stroke="#808387" stroke-width="3.200"/></svg>
    <svg class="t-reload" width="30" height="30" viewBox="0 0 30 30"><path d="M26.500 19A12 12 0 1 1 23 6.500" fill="none" stroke="#f1f3f4" stroke-width="3.200"/><path d="M27.500 1v12h-12z" fill="#f1f3f4"/></svg>
    <div class="omnibox">
      <svg width="20" height="24" viewBox="0 0 20 24"><rect x="1" y="9" width="18" height="14" rx="2" fill="#9aa0a6"/><path d="M5 10V6a5 5 0 0 1 10 0v4" fill="none" stroke="#9aa0a6" stroke-width="2.600"/></svg>
      <span class="url"><em>sgp1.clouds.oncloud.ph</em>:2096/cpsess4229997973/3rdparty/roundcube/?_task=mail&amp;_mbox=INBOX</span>
      <svg class="star" width="30" height="29" viewBox="0 0 30 29"><path d="M15 2.800l3.700 8.500 9.200.8-7 6.100 2.100 9L15 22.400l-8 4.800 2.100-9-7-6.100 9.200-.8z" fill="none" stroke="#c3c6ca" stroke-width="2.400"/></svg>
    </div>
    <div class="exts">
      <svg viewBox="0 0 34 34"><path d="M15 14h4l1 13h-6z" fill="#a5672e"/><circle cx="17" cy="8" r="8" fill="#79b43c"/><circle cx="10" cy="13" r="5" fill="#5f9a2c"/><circle cx="24" cy="13" r="5" fill="#6aa535"/><path d="M14 24l2-12h2l2 12z" fill="#a5672e"/><text x="1" y="33" textLength="32" font-family="Inter, sans-serif" font-weight="900" font-size="10" fill="#000">HTML</text></svg>
      <svg viewBox="0 0 34 34"><circle cx="17" cy="17" r="16" fill="#9a3ff0"/><circle cx="17" cy="17" r="14.500" fill="none" stroke="#c79cf5" stroke-width="3" stroke-dasharray="5 3"/><text x="17" y="22" text-anchor="middle" font-family="Inter, sans-serif" font-weight="700" font-size="14" fill="#2b1440">{···}</text></svg>
      <svg viewBox="0 0 34 34"><path d="M10.500 1h13L33 10.500v13L23.500 33h-13L1 23.500v-13z" fill="#d52b1e"/><path d="M11 12v7M14.500 9v10M18 8v11M21.500 10v9M11 18q0 9 6 9 5 0 8-9" fill="#fff" stroke="#fff" stroke-width="2.600" stroke-linecap="round"/></svg>
      <svg viewBox="0 0 34 34"><path d="M4 9h8a4 4 0 1 1 8 0h8v8a4 4 0 1 1 0 8v7h-8a4 4 0 1 0-8 0H4v-8a4 4 0 1 0 0-8z" fill="#f1f3f4"/></svg>
      <span class="avatar">Jm</span>
      <svg class="kebab" viewBox="0 0 6 28"><circle cx="3" cy="3" r="3"/><circle cx="3" cy="14" r="3"/><circle cx="3" cy="25" r="3"/></svg>
    </div>
  </div>

  <div class="app">
    <aside class="taskmenu">
      <svg class="logo"><use href="#cube"/></svg>
      <a class="compose"><svg style="width:40px"><use href="#edit"/></svg>Compose</a>
      <a class="sel"><svg><use href="#envelope"/></svg>Mail</a>
      <a><svg style="width:44px"><use href="#users"/></svg>Contacts</a>
      <a><svg><use href="#calendar"/></svg>Calendar</a>
      <a><svg><use href="#cog"/></svg>Settings</a>
      <a class="webmail"><svg style="width:47px"><use href="#cp"/></svg>Webmail<br>Home</a>
      <a class="about"><svg><use href="#question"/></svg>About</a>
      <a class="logout"><svg><use href="#power"/></svg>Logout</a>
    </aside>

    <section class="folders">
      <div class="head"><b>noreply@arverizon.com</b><svg class="dots" viewBox="0 0 10 36"><circle cx="5" cy="5" r="5"/><circle cx="5" cy="18" r="5"/><circle cx="5" cy="31" r="5"/></svg></div>
      <ul>
        <li class="sel"><svg style="width:40px"><use href="#inbox"/></svg>Inbox<span class="badge">8251</span></li>
        <li><svg><use href="#pencil"/></svg>Drafts</li>
        <li><svg><use href="#plane"/></svg>Sent</li>
        <li><svg><use href="#fire"/></svg>Junk</li>
        <li><svg><use href="#trash-o"/></svg>Trash</li>
        <li><svg><use href="#archive"/></svg>Archive</li>
      </ul>
      <div class="quota"><svg><use href="#disk"/></svg><div class="bar"><i style="width:21%"></i></div><b>21%</b></div>
    </section>

    <section class="list">
      <div class="head tools">
        <a><svg><use href="#pointer"/></svg>Select</a>
        <a class="off"><svg style="width:40px"><use href="#comments"/></svg>Threads</a>
        <a><svg><use href="#sliders"/></svg>Options</a>
        <a><svg><use href="#sync"/></svg>Refresh</a>
      </div>
      <div class="searchbar"><svg><use href="#search"/></svg><span>Search...</span><svg class="env"><use href="#envelope"/></svg><svg class="down" viewBox="0 0 24 16"><path d="M3 3l9 9 9-9" fill="none" stroke="currentColor" stroke-width="5.500"/></svg></div>
      <div class="messages">
        <article class="read"><p><span>postmaster@outlook.com</span><time>Today 00:00</time></p><h3>Undeliverable: Activé Le Pass Sécurité</h3><svg><use href="#file"/></svg></article>
        <article class="read sel"><p><span>Mail Delivery System</span><time>Fri 23:30</time></p><h3>Mail delivery failed: returning message to sender</h3><svg><use href="#file"/></svg></article>
        <article><p><span>Mail Delivery System</span><time>Fri 23:30</time></p><h3>Mail delivery failed: returning message to sender</h3><svg><use href="#file"/></svg></article>
        <article><p><span>Mail Delivery System</span><time>Fri 23:30</time></p><h3>Mail delivery failed: returning message to sender</h3><svg><use href="#file"/></svg></article>
        <article><p><span>Mail Delivery System</span><time>Fri 23:30</time></p><h3>Mail delivery failed: returning message to sender</h3><svg><use href="#file"/></svg></article>
        <article><p><span>Mail Delivery System</span><time>Fri 23:30</time></p><h3>Mail delivery failed: returning message to sender</h3><svg><use href="#file"/></svg></article>
        <article><p><span>Mail Delivery System</span><time>Fri 23:30</time></p><h3>Mail delivery failed: returning message to sender</h3><svg><use href="#file"/></svg></article>
        <article><p><span>Mail Delivery System</span><time>Fri 23:30</time></p><h3>Mail delivery failed: returning message to sender</h3><svg><use href="#file"/></svg></article>
        <article><p><span>Mail Delivery System</span><time>Fri 23:30</time></p><h3>Mail delivery failed: returning message to sender</h3><svg><use href="#file"/></svg></article>
        <article><p><span>Mail Delivery System</span><time>Fri 23:30</time></p><h3>Mail delivery failed: returning message to sender</h3><svg><use href="#file"/></svg></article>
        <article><p><span>Mail Delivery System</span><time>Fri 23:30</time></p><h3>Mail delivery failed: returning message to sender</h3><svg><use href="#file"/></svg></article>
      </div>
      <div class="pager">
        <span class="pg off flip"><svg><use href="#chev"/></svg><svg><use href="#chev"/></svg></span>
        <span class="pg off flip"><svg><use href="#chev"/></svg></span>
        <b>Messages 1 to 50 of 8279</b>
        <span class="page">1</span>
        <span class="pg"><svg><use href="#chev"/></svg></span>
        <span class="pg"><svg><use href="#chev"/></svg><svg><use href="#chev"/></svg></span>
      </div>
    </section>

    <section class="view">
      <div class="head tools">
        <a style="width:96px"><svg><use href="#reply"/></svg>Reply</a>
        <a style="width:112px"><svg style="width:40px"><use href="#replyall"/></svg>Reply all</a><i class="caret"></i>
        <a style="width:104px;margin-left:16px"><svg><use href="#forward"/></svg>Forward</a><i class="caret second"></i>
        <a style="width:96px;margin-left:37px"><svg><use href="#trash"/></svg>Delete</a>
        <a style="width:108px"><svg><use href="#archive"/></svg>Archive</a>
        <a style="width:90px"><svg><use href="#tag"/></svg>Mark</a>
        <a style="width:90px"><svg><use href="#more"/></svg>More</a>
      </div>
      <div class="body">
        <div class="attach"><svg><use href="#file"/></svg>Part 3.eml&nbsp;<span>(~26 KB)</span></div>
<pre class="first">This message was created automatically by mail delivery software.

A message that you sent could not be delivered to one or more of its
recipients. This is a permanent error. The following address(es) failed:

  <a>sksue@hotmail.fr</a>
    Domain arverizon.com has exceeded the max emails per hour (250/200 (125%))
allowed.  Message discarded.</pre>
<pre>Reporting-MTA: dns; sgp1.clouds.oncloud.ph

Action: failed
Final-Recipient: rfc822;<a>sksue@hotmail.fr</a>
Status: 5.0.0</pre>
        <dl>
          <dt>From</dt><dd><a>credit-Agricole</a></dd>
          <dt>To</dt><dd><a>sksue@hotmail.fr</a></dd>
          <dt>Date</dt><dd>Fri 23:05</dd>
          <dt>Priority</dt><dd></dd>
        </dl>
        <svg class="ca" viewBox="0 0 500 160" width="500" height="160">
          <g transform="translate(185 1)">
            <path d="M44 54L68 7h19l27 66H97L77 21 64 47q-4 7-20 7z" fill="#2d694c"/>
            <path d="M53 6q3-1 4 5l1 9C40 20 12 40 10 54q-1 8 18 7C60 58 100 40 129 18v15C100 52 70 74 35 74 12 74 0 62 0 46 0 26 24 6 53 6z" fill="#42979a"/>
            <path d="M97 16L129 0v13l-27 13q-3 1-4-3z" fill="#d52b37"/>
            <path d="M1 79h119v11H1z" fill="#2d694c"/>
          </g>
          <text x="0" y="154" textLength="492" font-family="Lato, sans-serif" font-weight="700" font-size="46" fill="#2d694c" lengthAdjust="spacingAndGlyphs">CRÉDIT AGRICOLE</text>
        </svg>
        <p class="bonjour">Bonjour,</p>
      </div>
    </section>
  </div>
</main>

<footer class="dock">
  <div class="app-ic run"><svg viewBox="0 0 104 104"><rect width="104" height="104" rx="24" fill="url(#g-blue)"/><path d="M57 0h23a24 24 0 0 1 24 24v56a24 24 0 0 1-24 24H65q-5-18-5-42H44Q45 24 57 0z" fill="#e3e7ee"/><path d="M27 31v8M77 31v8" stroke="#1c2a3c" stroke-width="4.500" stroke-linecap="round"/><path d="M22 70q30 26 61 0" fill="none" stroke="#1a1f28" stroke-width="4" stroke-linecap="round"/></svg></div>
  <div class="app-ic run"><svg viewBox="0 0 104 104"><rect width="104" height="104" rx="24" fill="url(#g-mail)"/><rect x="15" y="28" width="74" height="48" rx="5" fill="#f1f1f1"/><path d="M17 74l24-21M87 74L63 53M17 30l29 30q6 6 12 0l29-30" fill="none" stroke="#a9a9a9" stroke-width="2"/></svg><span class="count">10,380</span></div>
  <div class="app-ic"><svg viewBox="0 0 104 104"><rect width="104" height="104" rx="24" fill="url(#g-green)"/><rect x="16" y="30" width="51" height="46" rx="12" fill="url(#g-white)"/><path d="M69 50l16-16q3-2 3 2v34q0 4-3 2L69 56z" fill="url(#g-white)"/></svg></div>
  <div class="app-ic"><svg viewBox="0 0 104 104"><rect width="104" height="104" rx="24" fill="url(#g-green)"/><path d="M52 18c22 0 38 14 38 32S74 82 52 82q-7 0-12-1-6 5-12 5 5-4 5-9C21 71 14 62 14 50c0-18 16-32 38-32z" fill="url(#g-white)"/></svg></div>
  <div class="app-ic"><svg viewBox="0 0 104 104"><rect width="104" height="104" rx="24" fill="#f8f7f5"/><path d="M0 32v-8A24 24 0 0 1 24 0h56a24 24 0 0 1 24 24v8z" fill="#e4574c"/><text x="52" y="25" text-anchor="middle" font-family="Inter, sans-serif" font-weight="600" font-size="21" fill="#fff">JUN</text><text x="52" y="89" text-anchor="middle" font-family="Inter, sans-serif" font-weight="300" font-size="64" fill="#222">5</text></svg></div>
  <div class="app-ic run"><svg viewBox="0 0 104 104"><rect width="104" height="104" rx="24" fill="url(#g-paper)"/><path d="M0 27v-3A24 24 0 0 1 24 0h56a24 24 0 0 1 24 24v3z" fill="#f8ce4a"/><path d="M0 28h104M0 52h104M0 79h104" stroke="#c9c7c4" stroke-width="1.800"/><path d="M0 32h104" stroke="#b5b3b0" stroke-width="2" stroke-dasharray="2 2"/></svg></div>
  <div class="app-ic run"><svg viewBox="0 0 104 104"><rect width="104" height="104" rx="24" fill="#fdfdfd"/><path d="M52 52L14.800 30.500A43 43 0 0 1 89.200 30.500H52z" fill="#cf5244"/><path d="M52 52L33.400 62.700 14.800 30.500A43 43 0 0 0 52 95z" fill="#469e60"/><path d="M52 30.500h37.200A43 43 0 0 1 52 95l18.600-32.300z" fill="#f9ce5d"/><circle cx="52" cy="52" r="20" fill="#f3f4f6"/><circle cx="52" cy="52" r="16" fill="#5288ec"/></svg></div>
  <div class="app-ic"><svg class="big" viewBox="0 0 118 118"><circle cx="59" cy="59" r="59" fill="url(#g-opera)"/><path d="M46 18C60 4 92 8 108 28q10 14 10 31 0 17-10 31C92 110 60 114 46 100z" fill="url(#g-opera2)"/><ellipse cx="59" cy="59" rx="30" ry="42" fill="#171f2c"/></svg></div>
  <div class="app-ic run"><svg class="big" viewBox="0 0 118 118"><rect y="2" width="118" height="114" rx="27" fill="url(#g-term)"/><rect x="7" y="10" width="104" height="98" rx="20" fill="#000"/><path d="M39 21L21 38l9 3-6 14 17-18-8-4z" fill="#fff"/><path d="M46 50h20v4H46z" fill="#fff"/></svg></div>
  <div class="app-ic"><svg viewBox="0 0 104 104"><rect width="104" height="104" rx="24" fill="#fff"/><path d="M28 18h58v17H28z" fill="#58a4ea"/><path d="M28 35h58v17H28z" fill="#3d7dd0"/><path d="M28 52h58v17H28z" fill="#2459b8"/><path d="M28 69h58v17H28z" fill="#1b418c"/><rect x="10" y="33" width="38" height="38" rx="4" fill="#2256b2"/><text x="29" y="62" text-anchor="middle" font-family="Inter, sans-serif" font-weight="600" font-size="27" textLength="28" lengthAdjust="spacingAndGlyphs" fill="#fff">W</text></svg></div>
  <div class="app-ic"><svg class="big" viewBox="0 0 118 118"><circle cx="59" cy="59" r="57.500" fill="#64d36e"/><path d="M24 38q40-12 72 7" fill="none" stroke="#14180f" stroke-width="11" stroke-linecap="round"/><path d="M27 58q34-10 62 7" fill="none" stroke="#14180f" stroke-width="9" stroke-linecap="round"/><path d="M29 76q30-8 53 6" fill="none" stroke="#14180f" stroke-width="7.500" stroke-linecap="round"/></svg></div>
  <i class="sep"></i>
  <div class="app-ic run"><svg viewBox="0 0 104 104"><rect width="104" height="104" rx="24" fill="#fff"/><path d="M16 64q-3 3 0 5l4 3q2 1 5-1L70 33V17z" fill="#2765a6"/><path d="M16 42q-3-3 0-5l4-3q2-1 5 1l45 37v17z" fill="#2d79c7"/><path d="M70 16l18 9v54l-18 10q-2-1-2-4V20q0-3 2-4z" fill="#4399e8"/></svg></div>
  <div class="app-ic run"><svg viewBox="0 0 104 104"><rect width="104" height="104" rx="24" fill="#fff"/><path d="M52 12c24 0 41 17 41 40S76 92 52 92q-7 0-12-2l-11 4q-3 1-3-2l-1-8C16 77 11 66 11 52c0-23 17-40 41-40z" fill="url(#g-msgr)"/><path d="M28 65l13-21q4-5 9-2l9 7 14-9q4-2 3 2L64 62q-4 5-9 2l-9-6-14 9q-5 2-4-2z" fill="#fff"/></svg></div>
  <div class="app-ic run"><svg viewBox="0 0 104 104"><rect width="104" height="104" rx="24" fill="#fff"/><path d="M28 18h29v17H28z" fill="#4c9e67"/><path d="M57 18h29v17H57z" fill="#62bd84"/><path d="M28 35h29v17H28z" fill="#3a7f4e"/><path d="M57 35h29v17H57z" fill="#4c9e67"/><path d="M28 52h58v34H28z" fill="#2f5c3b"/><path d="M57 52h29v17H57z" fill="#3a7b4b"/><rect x="10" y="33" width="38" height="38" rx="4" fill="#367c48"/><text x="29" y="62" text-anchor="middle" font-family="Inter, sans-serif" font-weight="600" font-size="27" fill="#fff">X</text></svg></div>
  <div class="app-ic run"><svg class="big" viewBox="0 0 118 118"><rect x="1" y="1" width="116" height="116" rx="30" fill="url(#g-zoom)"/><path d="M25 39h38q12 0 12 12v28H37q-12 0-12-12zM79 53l14-12q3-1 3 2v33q0 3-3 2L79 66z" fill="#fff"/></svg></div>
  <div class="app-ic run gear"><svg class="big" viewBox="0 0 118 118"><path d="M0 0h62a55 55 0 0 1 56 56 57 57 0 0 1-57 59A58 58 0 0 1 0 58z" fill="#44577f"/><path d="M5 5h57a51 51 0 0 1 51 51 52 52 0 0 1-52 54A53 53 0 0 1 5 58z" fill="#fbfcff"/><path d="M5 5l45 40 63 6q0 59-52 59T5 58z" fill="#dbe5f4"/><circle cx="59" cy="55" r="26" fill="none" stroke="#74748a" stroke-width="20"/><circle cx="59" cy="55" r="38" fill="none" stroke="#74748a" stroke-width="13" stroke-dasharray="16 13.845"/><circle cx="59" cy="55" r="26" fill="none" stroke="#d6d6dc" stroke-width="16"/><circle cx="59" cy="55" r="37" fill="none" stroke="#d6d6dc" stroke-width="11" stroke-dasharray="12 17.060" stroke-dashoffset="-1.800"/><circle cx="59" cy="55" r="17" fill="#b2c7e8" stroke="#74748a" stroke-width="2"/></svg></div>
  <i class="sep second"></i>
  <div class="app-ic trash"><svg class="big" viewBox="0 0 104 128"><path d="M7 18h90L87 116q-1 10-12 10H29q-11 0-12-10z" fill="url(#g-bin)"/><path d="M11 16l10-12 8 3 10-7 10 8 8-6 10-3 8 9 10 1 6 12q-40 12-78 0z" fill="#dededc"/><path d="M24 24l16-10 8 12zM60 20l8-13 10 16-12 4z" fill="#5c4a40"/><path d="M36 16l12-3 4 8-10 4z" fill="#42b0c4"/><path d="M64 15l8 7-10 4z" fill="#3c5aa8"/><path d="M16 10l6 10M46 9l-6 6M84 12l-6 12M54 10l-4 16" stroke="#77726c" stroke-width="2"/><path d="M7 17q1 13 45 13t45-13" fill="none" stroke="#a5a8aa" stroke-width="2"/></svg></div>
</footer>
</body>
</html>
```
FILE: styles.css
```css
* { box-sizing: border-box; }
body {
  margin: 0; width: 2880px; height: 1800px; overflow: hidden;
  display: flex; flex-direction: column;
  background: linear-gradient(90deg, #1e3863 0, #142b52 1200px, #0b2048 1900px, #081a3c 2880px) 0 0 / 100% 90px no-repeat, linear-gradient(90deg, #02060c, #06121f 400px, #061325 2500px, #06152a);
  font-family: Roboto, sans-serif; color: #2c363a;
}
p, h3, ul, dl, dd, pre { margin: 0; padding: 0; }
.defs { position: absolute; }
svg { display: block; flex: none; fill: currentColor; }

/* macOS menu bar */
.menubar { height: 50px; display: flex; align-items: center; font: 26px Inter, sans-serif; color: #eef0f4; letter-spacing: -.3px; text-shadow: 0 2px 4px rgba(0,0,0,.35); padding-bottom: 3px; }
.apple { width: 28px; height: 34px; margin: -4px 0 0 43px; }
.menus { display: flex; margin-left: 43px; white-space: nowrap; }
.menus > * { flex: none; }
.status { display: flex; align-items: center; margin-left: auto; margin-right: 36px; white-space: nowrap; }
.s-disp { margin-left: 34px; }
.s-pct { margin-left: 35px; width: 58px; font-size: 24px; letter-spacing: -1px; }
.s-wifi { margin-left: 37px; }
.s-cc { margin-left: 37px; }
.s-siri { margin-left: 34px; }
.s-date { margin-left: 31px; width: 131px; letter-spacing: .5px; }
.s-time { width: 102px; letter-spacing: .7px; }

/* Browser window */
.window { position: relative; height: 1578px; border-radius: 20px; overflow: hidden; display: flex; flex-direction: column; background: #202124; box-shadow: 0 0 0 1px #000; }
.window::before { content: ""; position: absolute; z-index: 2; left: 150px; right: 150px; bottom: 0; height: 76px; background: linear-gradient(rgba(0,0,0,0), rgba(0,0,0,.13)); mask-image: linear-gradient(90deg, transparent, #000 130px, #000 calc(100% - 180px), transparent); }
.window::after { content: ""; position: absolute; z-index: 3; inset: 0; border: 2px solid rgba(255,255,255,.2); border-top-color: rgba(255,255,255,.36); border-bottom-color: transparent; border-radius: 20px; }
.tabstrip { height: 84px; display: flex; align-items: flex-end; font: 24.500px Inter, sans-serif; letter-spacing: -.5px; }
.lights { display: flex; gap: 16px; width: 210px; padding: 0 0 29px 42px; }
.lights i { width: 24px; height: 24px; border-radius: 50%; }
.red { background: #ed6a5e; } .amber { background: #f5bf4f; } .green { background: #61c554; }
.group { height: 56px; margin-right: 46px; flex: none; color: #202124; display: flex; flex-direction: column; justify-content: space-between; align-items: stretch; }
.group:nth-child(4) { margin-right: 20px; }
.group span { height: 44px; line-height: 43px; border-radius: 12px; text-align: center; background: var(--c); white-space: nowrap; }
.group::after { content: ""; height: 6px; border-radius: 8px 8px 0 0; background: var(--c); }
.grey { --c: #bdc1c6; } .coral { --c: #e58f85; } .blue { --c: #8fb2f1; }
.tabs { display: flex; align-items: flex-end; }
.tab { width: 108.200px; height: 68px; display: flex; align-items: center; padding-left: 17px; flex: none; color: #b3b6bb; background: linear-gradient(#55585c, #55585c) 0 15px / 2px 40px no-repeat; }
.tab svg { width: 32px; height: 32px; }
.tab span { width: 30px; margin-left: 17px; white-space: nowrap; overflow: hidden; mask-image: linear-gradient(90deg, #000 40%, transparent); }
.tab.active { width: 110px; margin: 0 -4px 0 -2px; background: #35363a; border-radius: 16px 16px 0 0; position: relative; }
.tab.active::before, .tab.active::after { content: ""; position: absolute; bottom: 0; width: 16px; height: 16px; left: -16px; background: radial-gradient(circle at 0 0, transparent 15.500px, #35363a 16px); }
.tab.active::after { left: auto; right: -16px; background: radial-gradient(circle at 100% 0, transparent 15.500px, #35363a 16px); }
.tab .close { width: 18px; height: 18px; margin-left: 20px; }
.tab.noline { background: none; }
.newtab { height: 68px; display: flex; align-items: center; padding-left: 32px; background: linear-gradient(#55585c, #55585c) 0 15px / 2px 40px no-repeat; }
.tabmenu { margin: 0 30px 20px auto; }

.toolbar { height: 74px; background: #35363a; border-bottom: 2px solid #28282a; display: flex; align-items: center; padding-left: 29px; }
.t-fwd { margin-left: 35px; } .t-reload { margin-left: 34px; }
.omnibox { margin-left: 29px; width: 2254px; height: 56px; border-radius: 28px; background: #202124; display: flex; align-items: center; padding-left: 25px; margin-top: -2px; }
.url { margin-left: 23px; font: 28px Inter, sans-serif; color: #9a9da1; white-space: nowrap; letter-spacing: .16px; padding-top: 2px; }
.url em { font-style: normal; color: #fff; letter-spacing: -.25px; }
.star { margin: 0 20px 0 auto; }
.exts { display: flex; align-items: center; margin-left: 27px; gap: 30px; }
.exts svg { width: 34px; height: 34px; }
.avatar { width: 42px; height: 42px; margin-left: -4px; border-radius: 50%; background: #5c4037; color: #fff; font: 22px/42px Roboto, sans-serif; text-align: center; }
.exts .kebab { width: 6px; height: 28px; margin-left: 10px; color: #f1f3f4; }

/* Roundcube */
.app { height: 1420px; display: flex; background: #fff; font-size: 28px; }
.taskmenu { width: 156px; background: #2f3a3f; color: #fff; display: flex; flex-direction: column; font-size: 25.200px; line-height: 30px; text-align: center; flex: none; }
.logo { width: 102px; height: 102px; margin: 10px 0 4px 28px; }
.taskmenu a { height: 116px; padding-top: 20px; flex: none; }
.taskmenu a svg { width: 35px; height: 35px; margin: 0 auto 14px; }
.taskmenu a.compose { color: #5cbaf9; }
.taskmenu a.sel { background: #4a565c; }
.taskmenu a.webmail { height: 130px; padding-top: 20px; }
.taskmenu a.webmail svg { height: 32px; margin-bottom: 12px; }
.taskmenu a.about { margin-top: auto; }
.taskmenu a.logout { color: #ef5f56; }

.folders, .list { flex: none; border-right: 2px solid #d4dbde; display: flex; flex-direction: column; }
.folders { width: 496px; }
.list { width: 744px; }
.head { height: 116px; background: #f4f4f4; border-bottom: 2px solid #d4dbde; flex: none; position: relative; }
.folders .head { display: flex; align-items: center; justify-content: center; padding-top: 2px; }
.folders .head b { font-size: 28px; font-weight: 700; }
.dots { position: absolute; right: 19px; top: 39px; width: 10px; height: 36px; }
.folders ul { list-style: none; flex: 1; }
.folders li { height: 72px; border-bottom: 2px solid #f1f3f4; display: flex; align-items: center; padding-bottom: 2px; }
.folders li svg { width: 35px; height: 35px; margin: 2px 17.500px 0 21px; }
.folders li:first-child svg { margin-left: 19px; margin-right: 14.500px; }
.folders li.sel { background: #ecf8fe; font-weight: 700; }
.badge { margin: 0 14px 0 auto; width: 82px; height: 38px; border-radius: 10px; background: #5cbaf9; color: #fff; font-size: 26px; line-height: 39px; text-align: center; }
.quota, .pager { height: 70px; border-top: 2px solid #d4dbde; display: flex; align-items: center; color: #6d7072; font-size: 25.200px; flex: none; }
.quota svg { width: 40px; height: 36px; margin-left: 66px; }
.bar { width: 218px; height: 14px; margin-left: 36px; border: 2px solid #d4dbde; border-radius: 7px; overflow: hidden; background: #fff; }
.bar i { display: block; height: 100%; background: #83c3ef; }
.quota b { margin-left: 27px; font-size: 22.400px; }

.tools { display: flex; justify-content: center; gap: 26px; padding-top: 20px; font-size: 25.200px; line-height: 30px; text-align: center; }
.tools svg { width: 35px; height: 35px; margin: 0 auto 14px; }
.off { color: #929698; }
.searchbar { height: 72px; background: #fbfbfb; border-bottom: 2px solid #f1f3f4; display: flex; align-items: center; color: #737677; padding-left: 22px; flex: none; }
.searchbar svg { width: 36px; height: 36px; }
.searchbar span { margin-left: 15px; padding-top: 2px; }
.searchbar .env { margin-left: auto; color: #2c363a; }
.searchbar .down { width: 24px; height: 16px; margin: 0 15px 0 26px; color: #2c363a; }
.messages { flex: 1; overflow: hidden; min-height: 0; }
article { height: 108px; border-bottom: 2px solid #f1f3f4; display: grid; grid-template-columns: 615px 1fr; column-gap: 21px; padding-left: 57px; grid-template-rows: 50px 56px; align-items: center; position: relative; }
article p { display: flex; justify-content: space-between; font-size: 25.200px; color: #737677; grid-column: 1; }
article h3 { grid-row: 2; font-size: 28px; font-weight: 700; white-space: nowrap; }
article.read h3 { font-weight: 400; }
article svg { grid-row: 2; width: 27px; height: 36px; color: #929698; margin-bottom: 2px; }
article::before { content: ""; position: absolute; left: 27px; top: 70px; width: 14px; height: 14px; border-radius: 50%; background: #fdd663; }
article.read::before { background: #2c363a; width: 12px; height: 12px; left: 28px; top: 71px; }
article.sel { background: #ecf8fe; box-shadow: inset 4px 0 #a5d9fb; }
.pager { color: #2c363a; padding-left: 18px; }
.pager b { color: #6d7072; font-size: 22.400px; width: 261px; text-align: center; white-space: nowrap; margin-left: 87px; }
.pg { display: flex; }
.pg.flip { transform: scaleX(-1); }
.pg.flip + .flip { margin-left: 35px; }
.pg svg { width: 20px; height: 27px; }
.pg svg + svg { margin-left: -7px; }
.page { width: 84px; height: 44px; border: 2px solid #cdd4d9; border-radius: 8px; text-align: center; line-height: 39px; font-size: 25.200px; margin: 0 24px 0 76px; }
.page + .pg + .pg { margin-left: 34px; }

.view { flex: 1; display: flex; flex-direction: column; min-width: 0; }
.view .tools { gap: 0; justify-content: flex-start; padding-left: 350px; }
.caret { border: 7px solid transparent; border-top: 8px solid #2c363a; border-bottom: 0; height: 0; margin-top: 33px; }
.caret.second { margin-left: 4px; }
.body { flex: 1; min-height: 0; overflow: hidden; padding: 0 28px; }
.attach { height: 60px; margin-top: -36px; border: 2px solid #f1f3f4; background: #fbfbfb; display: flex; align-items: center; padding-left: 14px; }
.attach svg { width: 28px; height: 36px; margin: -6px 14px 0 0; }
.attach span { color: #737677; }
pre { font: 28px/42px "Liberation Mono", monospace; padding: 17px 0 11px; border-bottom: 2px solid #f1f3f4; }
pre.first { padding: 44px 0 12px; }
.body a { color: #41a6f5; }
dl { display: grid; grid-template-columns: 113px 1fr; grid-auto-rows: 40px; font-size: 25.200px; line-height: 40px; padding: 14px 0 14px 2px; border-bottom: 2px solid #f1f3f4; color: #737677; }
dt { font-weight: 700; }
.ca { margin: 160px 0 0 177px; }
.bonjour { font: 27.300px/32px "Liberation Sans", sans-serif; color: #000; margin: 88px 0 0 100px; }

/* Dock */
.dock { width: 2484px; height: 160px; margin: 2px 0 0 198px; background: linear-gradient(#161d28, #16202f); border: 2px solid #3c4551; border-radius: 46px; display: flex; align-items: center; padding-left: 3px; }
.app-ic { width: 138px; height: 156px; flex: none; display: flex; align-items: flex-start; justify-content: center; padding-top: 19px; position: relative; }
.app-ic svg { width: 105px; height: 105px; }
.app-ic svg.big { width: 118px; height: 118px; margin-top: -6px; }
.app-ic.run::after { content: ""; position: absolute; left: 65px; bottom: 2px; width: 8px; height: 8px; border-radius: 50%; background: #949ba8; }
.count { position: absolute; left: 43px; top: 9px; width: 92px; height: 49px; border-radius: 25px; background: #e04a3d; color: #fff; font: 26px/48px Inter, sans-serif; letter-spacing: -1px; text-align: center; }
.sep { width: 2px; height: 120px; background: #4a525e; margin: 0 28px 0 33px; }
.sep.second { margin: 0 28px 0 34px; }
.app-ic.gear { margin-left: -2px; }
.app-ic.trash svg.big { height: 128px; width: 104px; margin-top: -9px; }
```
